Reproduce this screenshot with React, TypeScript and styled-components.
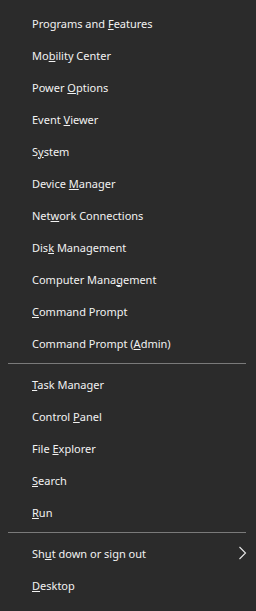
import styled, { createGlobalStyle } from "styled-components";

const GlobalStyle = createGlobalStyle`
  html, body {
    margin: 0;
    padding: 0;
    background: #2b2b2b;
  }
`;

// key = index of the access-key letter (underlined)
type Entry = { label: string; key: number; arrow?: boolean };

const groups: Entry[][] = [
  [
    { label: "Programs and Features", key: 13 },
    { label: "Mobility Center", key: 2 },
    { label: "Power Options", key: 6 },
    { label: "Event Viewer", key: 6 },
    { label: "System", key: 1 },
    { label: "Device Manager", key: 7 },
    { label: "Network Connections", key: 3 },
    { label: "Disk Management", key: 3 },
    { label: "Computer Management", key: 13 },
    { label: "Command Prompt", key: 0 },
    { label: "Command Prompt (Admin)", key: 16 },
  ],
  [
    { label: "Task Manager", key: 0 },
    { label: "Control Panel", key: 8 },
    { label: "File Explorer", key: 5 },
    { label: "Search", key: 0 },
    { label: "Run", key: 0 },
  ],
  [
    { label: "Shut down or sign out", key: 2, arrow: true },
    { label: "Desktop", key: 0 },
  ],
];

const Menu = () => {
  return (
    <Wrapper>
      {groups.map((group, gi) => (
        <Group key={gi}>
          {gi > 0 && <Separator />}
          {group.map((item) => (
            <Item key={item.label}>
              <span>
                {item.label.slice(0, item.key)}
                <Access>{item.label.charAt(item.key)}</Access>
                {item.label.slice(item.key + 1)}
              </span>
              {item.arrow && (
                <Chevron width="9" height="14" viewBox="0 0 9 14">
                  <path d="M1.5 1 L7.5 7 L1.5 13" fill="none" stroke="#e8e8e8" strokeWidth="1.1" />
                </Chevron>
              )}
            </Item>
          ))}
        </Group>
      ))}
    </Wrapper>
  );
};

export default function App() {
  return (
    <>
      <GlobalStyle />
      <Menu />
    </>
  );
}

const Wrapper = styled.div`
  width: 256px;
  height: 611px;
  box-sizing: border-box;
  padding-top: 7px;
  background: #2b2b2b;
  font-family: "Noto Sans", "Open Sans", sans-serif;
  font-size: 11px;
  color: #f2f2f2;
`;

const Group = styled.div`
  display: flex;
  flex-direction: column;
`;

const Separator = styled.div`
  height: 1px;
  margin: 4px 10px 4px 8px;
  background: #7a7a7a;
`;

const Item = styled.div`
  height: 32px;
  display: flex;
  align-items: center;
  justify-content: space-between;
  padding: 0 9px 0 32px;
  white-space: nowrap;
`;

const Access = styled.span`
  text-decoration: underline;
  text-underline-offset: 1px;
`;

const Chevron = styled.svg`
  display: block;
`;
